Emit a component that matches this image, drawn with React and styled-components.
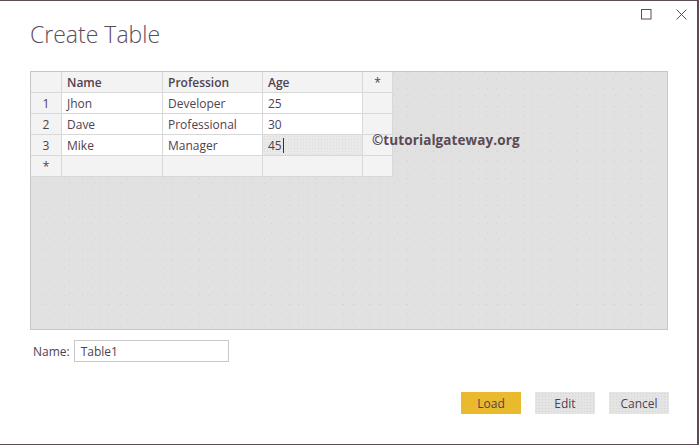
import React from "react";
import styled, { createGlobalStyle } from "styled-components";

const Global = createGlobalStyle`
  html, body { margin: 0; padding: 0; background: #ffffff; }
  body { font-family: "Open Sans", "Noto Sans", sans-serif; }
  * { box-sizing: border-box; }
`;

const TEXT = "#4f4250";
const LINE = "#d8d8d8";

const Window = styled.div`
  width: 699px;
  height: 445px;
  background: #fff;
  border-top: 1px solid #5e4b57;
  border-right: 2px solid #5e4b57;
  border-bottom: 1px solid #5e4b57;
  display: flex;
  flex-direction: column;
  color: ${TEXT};
  font-family: "Open Sans", "Noto Sans", sans-serif;
`;

const TopBar = styled.div`
  display: flex;
  justify-content: flex-end;
  align-items: center;
  gap: 24px;
  padding: 8px 10px 0 0;
  height: 18px;
`;

const Title = styled.h1`
  margin: 0 0 0 30px;
  font-size: 23px;
  font-weight: 300;
  line-height: 30px;
  color: #5b4c59;
`;

const Panel = styled.div`
  position: relative;
  margin: 22px 0 0 30px;
  width: 638px;
  height: 259px;
  border: 1px solid #c6c6c6;
  background-color: #e1e1e1;
  background-image: radial-gradient(circle, #d2d2d2 0.8px, transparent 1px),
    radial-gradient(circle, #d6d6d6 0.7px, transparent 1px);
  background-size: 9px 9px, 13px 11px;
  background-position: 2px 3px, 6px 7px;
`;

const Grid = styled.div`
  display: inline-grid;
  grid-template-columns: 30px 100px 99px 99px 29px;
  grid-auto-rows: 20px;
  gap: 1px;
  padding: 0 1px 1px 0;
  background: ${LINE};
  font-size: 12px;
`;

const Cell = styled.div`
  background: ${(p) => (p.$shade ? "#f3f3f3" : "#ffffff")};
  display: flex;
  align-items: center;
  justify-content: ${(p) => (p.$center ? "center" : "flex-start")};
  padding-left: ${(p) => (p.$center ? "0" : "5px")};
  font-weight: ${(p) => (p.$head ? 600 : 400)};
  color: ${TEXT};
  white-space: nowrap;
  overflow: hidden;
  ${(p) =>
    p.$selected &&
    `
    background-color: #e9e9e9;
    background-image: radial-gradient(circle, #dcdcdc 0.7px, transparent 1px);
    background-size: 3px 3px;
  `}
`;

const Caret = styled.span`
  display: inline-block;
  width: 1px;
  height: 15px;
  background: #3a3038;
  margin-left: 1px;
`;

const Watermark = styled.div`
  position: absolute;
  left: 341px;
  top: 59px;
  font-size: 13.5px;
  font-weight: 700;
  color: #5a4a56;
  letter-spacing: 0.1px;
`;

const NameRow = styled.div`
  display: flex;
  align-items: center;
  margin: 10px 0 0 33px;
  gap: 4px;
  font-size: 12px;
`;

const Label = styled.label`
  color: ${TEXT};
`;

const Input = styled.div`
  width: 155px;
  height: 22px;
  border: 1px solid #c8c8c8;
  padding-left: 6px;
  display: flex;
  align-items: center;
  font-size: 12px;
  color: ${TEXT};
`;

const Buttons = styled.div`
  display: flex;
  justify-content: flex-end;
  gap: 14px;
  margin: 30px 28px 0 0;
`;

const Button = styled.button`
  width: 60px;
  height: 22px;
  border: none;
  padding: 0;
  font-family: inherit;
  font-size: 12px;
  color: ${TEXT};
  background-color: ${(p) => (p.$primary ? "#e9b92e" : "#e4e4e4")};
  background-image: ${(p) =>
    p.$primary
      ? "none"
      : "radial-gradient(circle, #d6d6d6 0.7px, transparent 1px)"};
  background-size: 3px 3px;
`;

const IconSvg = styled.svg`
  display: block;
`;

const rows = [
  ["1", "Jhon", "Developer", "25"],
  ["2", "Dave", "Professional", "30"],
  ["3", "Mike", "Manager", "45"],
];

export default function App() {
  return (
    <>
      <Global />
      <Window>
        <TopBar>
          <IconSvg width="11" height="11" viewBox="0 0 11 11">
            <rect x="0.5" y="0.5" width="9.5" height="9.5" fill="none" stroke="#5e4b57" strokeWidth="1" />
          </IconSvg>
          <IconSvg width="11" height="11" viewBox="0 0 11 11">
            <path d="M0.5 0.5 L10.5 10.5 M10.5 0.5 L0.5 10.5" stroke="#5e4b57" strokeWidth="1" />
          </IconSvg>
        </TopBar>
        <Title>Create Table</Title>
        <Panel>
          <Grid>
            <Cell $shade />
            <Cell $shade $head>Name</Cell>
            <Cell $shade $head>Profession</Cell>
            <Cell $shade $head>Age</Cell>
            <Cell $shade $center>*</Cell>
            {rows.map((r, i) => (
              <React.Fragment key={r[0]}>
                <Cell $shade $center>{r[0]}</Cell>
                <Cell>{r[1]}</Cell>
                <Cell>{r[2]}</Cell>
                {i === 2 ? (
                  <Cell $selected>
                    {r[3]}
                    <Caret />
                  </Cell>
                ) : (
                  <Cell>{r[3]}</Cell>
                )}
                <Cell $shade />
              </React.Fragment>
            ))}
            <Cell $shade $center>*</Cell>
            <Cell $shade />
            <Cell $shade />
            <Cell $shade />
            <Cell $shade />
          </Grid>
          <Watermark>©tutorialgateway.org</Watermark>
        </Panel>
        <NameRow>
          <Label>Name:</Label>
          <Input>Table1</Input>
        </NameRow>
        <Buttons>
          <Button $primary>Load</Button>
          <Button>Edit</Button>
          <Button>Cancel</Button>
        </Buttons>
      </Window>
    </>
  );
}
